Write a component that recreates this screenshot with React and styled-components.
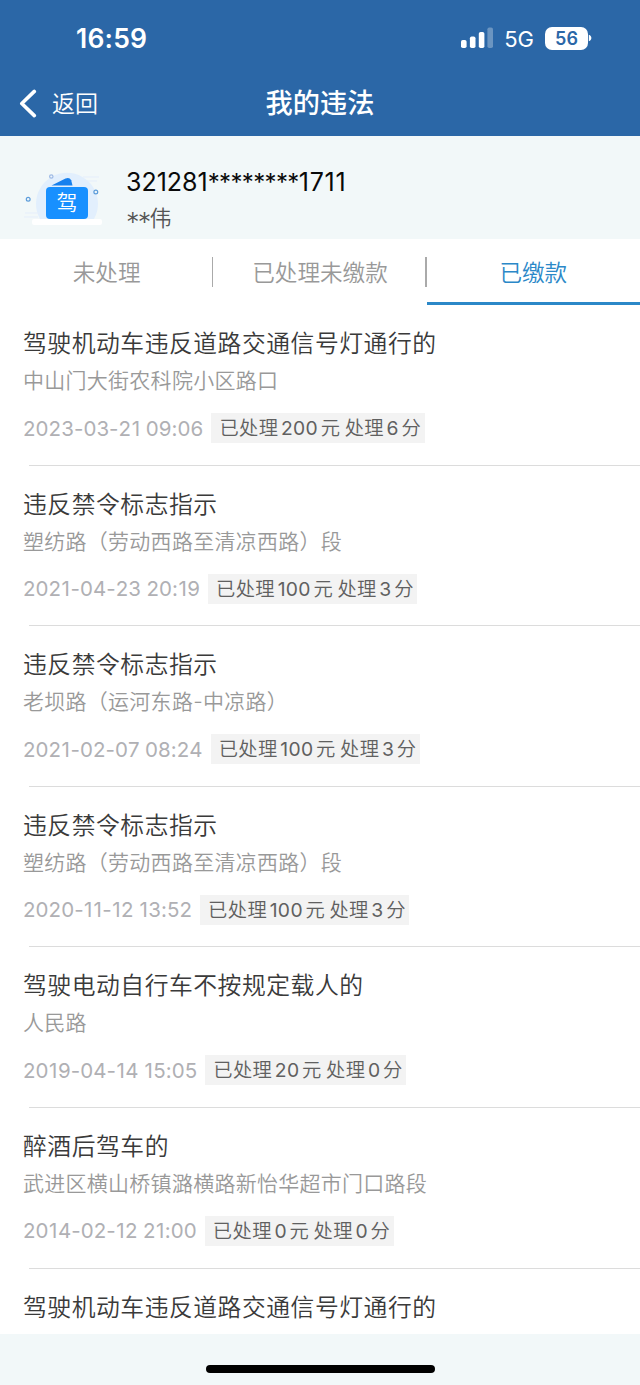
import styled, { createGlobalStyle } from "styled-components"

const App = () => {

  const TABS = [
    {id: 'pending', title: '未处理'},
    {id: 'unpaid', title: '已处理未缴款'},
    {id: 'paid', title: '已缴款'}
  ]

  const RECORDS = [
    {title: '驾驶机动车违反道路交通信号灯通行的', place: '中山门大街农科院小区路口', date: '2023-03-21 09:06', fine: 200, points: 6},
    {title: '违反禁令标志指示', place: '塑纺路（劳动西路至清凉西路）段', date: '2021-04-23 20:19', fine: 100, points: 3},
    {title: '违反禁令标志指示', place: '老坝路（运河东路-中凉路）', date: '2021-02-07 08:24', fine: 100, points: 3},
    {title: '违反禁令标志指示', place: '塑纺路（劳动西路至清凉西路）段', date: '2020-11-12 13:52', fine: 100, points: 3},
    {title: '驾驶电动自行车不按规定载人的', place: '人民路', date: '2019-04-14 15:05', fine: 20, points: 0},
    {title: '醉酒后驾车的', place: '武进区横山桥镇潞横路新怡华超市门口路段', date: '2014-02-12 21:00', fine: 0, points: 0},
    {title: '驾驶机动车违反道路交通信号灯通行的'}
  ]

  return (
    <Screen>
      <GlobalStyle />
      <Header>
        <StatusBar>
          <Clock>16:59</Clock>
          <Status>
            <Signal />
            <Network>5G</Network>
            <Battery>56</Battery>
            <BatteryTip />
          </Status>
        </StatusBar>
        <NavBar>
          <Back>
            <svg width="18" height="30" viewBox="0 0 18 30" fill="none" stroke="#fff" strokeWidth="3.6" strokeLinecap="round" strokeLinejoin="round">
              <path d="M15.3 2.4 2.8 14.5l12.5 12.1" />
            </svg>
            <BackLabel>返回</BackLabel>
          </Back>
          <PageTitle>我的违法</PageTitle>
        </NavBar>
      </Header>
      <Profile>
        <LicenseIcon />
        <div>
          <IdNumber>321281<Mask>********</Mask><Tail>1711</Tail></IdNumber>
          <Name><NameMask>**</NameMask>伟</Name>
        </div>
      </Profile>
      <Tabs>
        {TABS.map(tab => (
          <Tab key={tab.id} $active={tab.id === 'paid'}>{tab.title}</Tab>
        ))}
      </Tabs>
      <List>
        {RECORDS.map((record, i) => (
          <Record key={i}>
            <RecordTitle>{record.title}</RecordTitle>
            {record.place && (
              <>
                <Place>{record.place}</Place>
                <Meta>
                  <DateText>
                    {record.date.split(/(1)/).map((part, j) => part === '1' ? <One key={j}>1</One> : part)}
                  </DateText>
                  <Badge>已处理<Num>{record.fine}</Num>元 处理<Num>{record.points}</Num>分</Badge>
                </Meta>
              </>
            )}
          </Record>
        ))}
      </List>
      <Footer>
        <HomeIndicator />
      </Footer>
    </Screen>
  )
}

const Signal = () => (
  <svg width="32" height="22" viewBox="0 0 32 22" fill="#fff">
    <rect x="0" y="13" width="5.6" height="8" rx="1.8" />
    <rect x="8.9" y="9.4" width="5.6" height="11.6" rx="1.8" />
    <rect x="17.8" y="5" width="5.6" height="16" rx="1.8" />
    <rect x="26.4" y="0.4" width="5.6" height="20.6" rx="1.8" opacity=".3" />
  </svg>
)

const BatteryTip = () => (
  <svg width="4" height="8" viewBox="0 0 4 8" fill="#fff">
    <path d="M0.8 0.8C4.2 1.8 4.2 6.2 0.8 7.2z" />
  </svg>
)

const LicenseIcon = () => (
  <LicenseBox>
    <svg width="84" height="62" viewBox="0 0 84 62">
      <path d="M17 51A31 31 0 1 1 71 51z" fill="#e2effd" />
      <path d="M60 9h16M62 13h12M2 45h16M1 49h14" stroke="#e5eefb" strokeWidth="1" />
      <rect x="9" y="51" width="70" height="6" rx="2" fill="#fff" />
      <path d="M28.5 17.5 42.5 10.4Q46.5 8.8 48.2 12.2L49.5 17.5z" fill="#1680ee" />
      <rect x="23" y="19" width="42" height="32" rx="4" fill="#1890ff" />
      <g fill="#eef6fb" stroke="#5c9cda" strokeWidth="1.2">
        <circle cx="28.3" cy="8.5" r="1.7" stroke="#9db9e5" />
        <circle cx="72.8" cy="24" r="1.9" />
        <circle cx="5.2" cy="31.3" r="1.9" />
      </g>
    </svg>
    <LicenseChar>驾</LicenseChar>
  </LicenseBox>
)

const GlobalStyle = createGlobalStyle`
  body {
    margin: 0;
    background: #fff;
    font-family: Inter, "Noto Sans CJK SC", sans-serif;
  }
  * {
    box-sizing: border-box;
  }
`

const Screen = styled.div`
  display: flex;
  flex-direction: column;
  width: 640px;
  height: 1385px;
  overflow: hidden;
`

const Header = styled.header`
  flex: none;
  height: 136px;
  background: #2b67a7;
  color: #fff;
`

const StatusBar = styled.div`
  display: flex;
  justify-content: space-between;
  align-items: center;
  height: 72px;
  padding: 4px 48px 0 76px;
`

const Clock = styled.span`
  font-size: 26.5px;
  font-weight: 600;
  letter-spacing: .2px;
`

const Status = styled.div`
  display: flex;
  align-items: center;
`

const Network = styled.span`
  margin: 2px 11px 0 11px;
  font-size: 22px;
  font-weight: 400;
  line-height: 28px;
`

const Battery = styled.span`
  width: 43px;
  height: 23px;
  border-radius: 7px;
  background: #fff;
  color: #2b67a7;
  font-size: 18px;
  font-weight: 600;
  line-height: 23px;
  text-align: center;
`

const NavBar = styled.nav`
  display: grid;
  grid-template-columns: 1fr auto 1fr;
  align-items: center;
  height: 64px;
  padding: 0 19px;
`

const Back = styled.div`
  display: flex;
  align-items: center;
  gap: 15px;
`

const BackLabel = styled.span`
  font-size: 23px;
  font-weight: 350;
  line-height: 34px;
`

const PageTitle = styled.h1`
  margin: 0;
  font-size: 27.2px;
  font-weight: 500;
  line-height: 40px;
`

const Profile = styled.section`
  display: flex;
  flex: none;
  align-items: flex-start;
  height: 103px;
  padding: 28px 23px 0;
  background: #f2f8f9;
`

const LicenseBox = styled.div`
  position: relative;
  width: 84px;
  height: 62px;
  margin: 4px 19px 0 0;
`

const LicenseChar = styled.span`
  position: absolute;
  top: 19px;
  left: 23px;
  width: 42px;
  color: #fff;
  font-size: 21px;
  font-weight: 350;
  line-height: 32px;
  text-align: center;
`

const IdNumber = styled.div`
  color: #0a0a0a;
  font-size: 25px;
  line-height: 36px;
  white-space: nowrap;
`

const Mask = styled.span`
  font-size: 24px;
  letter-spacing: -.65px;
`

const Tail = styled.span`
  letter-spacing: .75px;
`

const Name = styled.div`
  display: flex;
  color: #555;
  font-size: 22px;
  font-weight: 350;
  line-height: 35px;
`

const NameMask = styled.span`
  padding-top: 4px;
  font-size: 27px;
  font-weight: 300;
  letter-spacing: -1.8px;
`

const Tabs = styled.div`
  display: flex;
  flex: none;
  height: 66px;
`

const Tab = styled.div`
  position: relative;
  flex: 1;
  height: 66px;
  border-bottom: 3px solid ${props => props.$active ? '#2b88c8' : 'transparent'};
  color: ${props => props.$active ? '#2b88c8' : '#999'};
  font-size: 22.6px;
  font-weight: 350;
  line-height: 67px;
  text-align: center;
  &:not(:last-child)::after {
    content: '';
    position: absolute;
    top: 18px;
    right: 0;
    width: 1.5px;
    height: 30px;
    background: #aaa;
  }
`

const List = styled.main`
  flex: 1;
  overflow: hidden;
  background: #fff;
`

const Record = styled.article`
  position: relative;
  height: 160.6px;
  padding: 20px 0 0 23px;
  &:not(:last-child)::after {
    content: '';
    position: absolute;
    right: 0;
    bottom: 0;
    left: 29px;
    height: 1px;
    background: #dcdcdc;
  }
`

const RecordTitle = styled.h2`
  margin: 0;
  color: #3a3a3a;
  font-size: 23.8px;
  font-weight: 350;
  letter-spacing: .53px;
  line-height: 37px;
`

const Place = styled.p`
  margin: 1px 0 0;
  color: #999;
  font-size: 21px;
  font-weight: 350;
  letter-spacing: .27px;
  line-height: 36px;
`

const Meta = styled.div`
  display: flex;
  align-items: center;
  gap: 8px;
  height: 30px;
  margin-top: 14px;
`

const DateText = styled.time`
  color: #b0b0b4;
  font-size: 20.5px;
  font-kerning: none;
  letter-spacing: .07px;
  word-spacing: -.5px;
`

const One = styled.span`
  padding: 0 .45px;
`

const Badge = styled.span`
  height: 30px;
  padding: 0 3.5px 0 8px;
  background: #f3f3f3;
  color: #606060;
  font-size: 19.3px;
  font-weight: 350;
  letter-spacing: .37px;
  word-spacing: -1.5px;
  line-height: 31px;
  white-space: nowrap;
`

const Num = styled.span`
  margin: 0 2.6px;
  font-weight: 400;
`

const Footer = styled.footer`
  display: flex;
  flex: none;
  justify-content: center;
  height: 51px;
  padding-top: 31px;
  background: #f2f8f9;
`

const HomeIndicator = styled.div`
  width: 229px;
  height: 8px;
  border-radius: 4px;
  background: #000;
`

export default App
